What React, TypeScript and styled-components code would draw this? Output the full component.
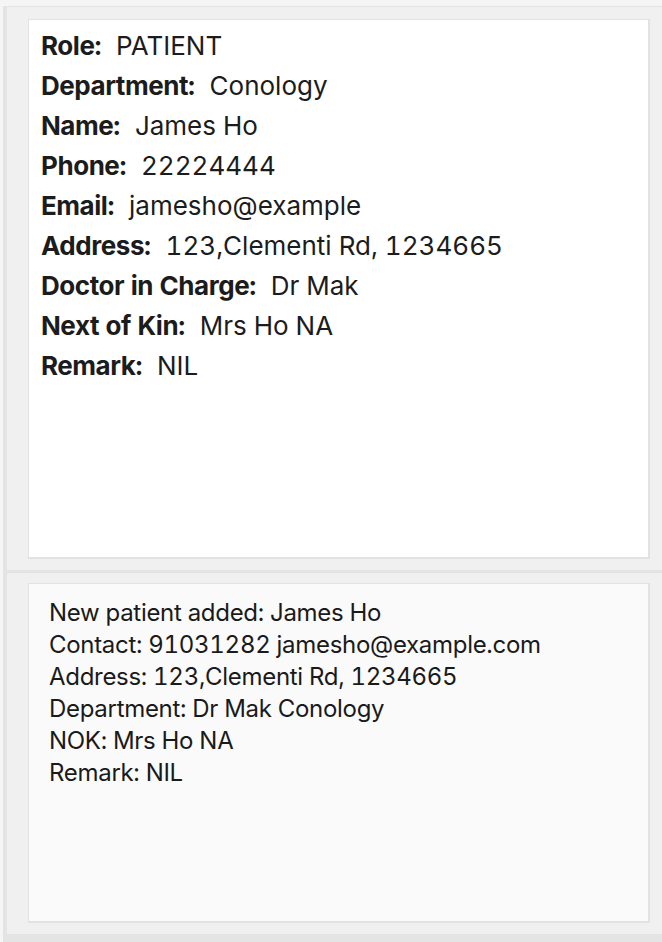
import React from "react";
import styled, { createGlobalStyle } from "styled-components";

const Global = createGlobalStyle`
  html, body { margin: 0; padding: 0; background: #f5f5f5; }
  body { font-family: Inter, "Noto Sans", sans-serif; }
`;

const Frame = styled.div`
  width: 662px;
  height: 942px;
  box-sizing: border-box;
  padding: 6px 0 0 3px;
  display: flex;
`;

const Shell = styled.div`
  flex: 1;
  display: flex;
  flex-direction: column;
  background: #f0f0f0;
  border-top: 1px solid #e4e4e4;
  border-left: 4px solid #e4e4e4;
  border-bottom: 8px solid #e4e4e4;
`;

const Pane = styled.div<{ $h: number; $top: number; $bottom: number }>`
  height: ${(p) => p.$h}px;
  box-sizing: border-box;
  padding: ${(p) => p.$top}px 12px ${(p) => p.$bottom}px 21px;
  display: flex;
`;

const Divider = styled.div`
  height: 3px;
  background: #e4e4e4;
`;

const Card = styled.div<{ $bg: string; $pad: string }>`
  flex: 1;
  box-sizing: border-box;
  background: ${(p) => p.$bg};
  border: 1px solid #e2e2e2;
  border-width: 1px 2px 2px 1px;
  padding: ${(p) => p.$pad};
`;

const Row = styled.div`
  font-size: 26px;
  line-height: 40px;
  color: #1c1c1c;
  white-space: nowrap;
  font-variant-numeric: tabular-nums;
`;

const Label = styled.span`
  font-weight: 700;
  letter-spacing: -0.45px;
  margin-right: 15px;
`;

const Log = styled.div`
  font-size: 24px;
  line-height: 32px;
  color: #1a1a1a;
  letter-spacing: -0.3px;
  white-space: pre;
  font-variant-numeric: tabular-nums;
`;

const fields: [string, string][] = [
  ["Role:", "PATIENT"],
  ["Department:", "Conology"],
  ["Name:", "James Ho"],
  ["Phone:", "22224444"],
  ["Email:", "jamesho@example"],
  ["Address:", "123,Clementi Rd, 1234665"],
  ["Doctor in Charge:", "Dr Mak"],
  ["Next of Kin:", "Mrs Ho NA"],
  ["Remark:", "NIL"],
];

const logLines = [
  "New patient added: James Ho",
  "Contact: 91031282 jamesho@example.com",
  "Address: 123,Clementi Rd, 1234665",
  "Department: Dr Mak Conology",
  "NOK: Mrs Ho NA",
  "Remark: NIL",
];

export default function App() {
  return (
    <>
      <Global />
      <Frame>
        <Shell>
          <Pane $h={563} $top={12} $bottom={11}>
            <Card $bg="#ffffff" $pad="6px 12px 0 12px">
              {fields.map(([l, v]) => (
                <Row key={l}>
                  <Label>{l}</Label>
                  {v}
                </Row>
              ))}
            </Card>
          </Pane>
          <Divider />
          <Pane $h={361} $top={10} $bottom={11}>
            <Card $bg="#fafafa" $pad="13px 20px 0 20px">
              {logLines.map((t) => (
                <Log key={t}>{t}</Log>
              ))}
            </Card>
          </Pane>
        </Shell>
      </Frame>
    </>
  );
}
